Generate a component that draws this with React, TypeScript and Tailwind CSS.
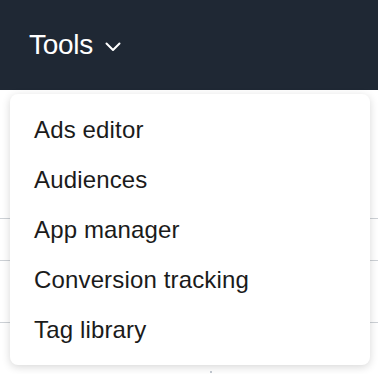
import React from "react";

const items = ["Ads editor", "Audiences", "App manager", "Conversion tracking", "Tag library"];

const App: React.FC = () => {
    return (
        <div className="relative w-[378px] h-[374px] overflow-hidden bg-white" style={{ fontFamily: '"Liberation Sans", Arial, sans-serif' }}>
            <header className="h-[90px] bg-[#1f2834] flex items-center px-[29px]">
                <button className="flex items-center gap-[12px] text-white text-[28px] tracking-[-0.3px]">
                    <span>Tools</span>
                    <svg width="16" height="10" viewBox="0 0 16 10" fill="none" className="mt-[4px]">
                        <path d="M1.5 1.5 L8 8 L14.5 1.5" stroke="white" strokeWidth="2" strokeLinecap="round" strokeLinejoin="round" />
                    </svg>
                </button>
            </header>

            {/* page content behind the menu */}
            <div className="flex flex-col">
                <div className="h-[129px] border-b border-[#cdd1d6]" />
                <div className="h-[42px] border-b border-[#cdd1d6]" />
                <div className="h-[62px] border-b border-[#cdd1d6]" />
                <div className="h-[49px] flex">
                    <span className="ml-[210px] mt-[48px] w-[2px] h-[2px] bg-[#c3c9d1]" />
                </div>
            </div>

            <div className="absolute left-[10px] top-[94px] w-[360px] rounded-[8px] bg-white shadow-[0_2px_8px_rgba(0,0,0,0.16)] pt-[11px] pb-[10px]">
                <ul className="flex flex-col">
                    {items.map((item) => (
                        <li key={item} className="h-[50px] flex items-center px-[24px] text-[24px] tracking-[0.15px] text-[#1b1b1b]">
                            {item}
                        </li>
                    ))}
                </ul>
            </div>
        </div>
    );
};

export default App;
